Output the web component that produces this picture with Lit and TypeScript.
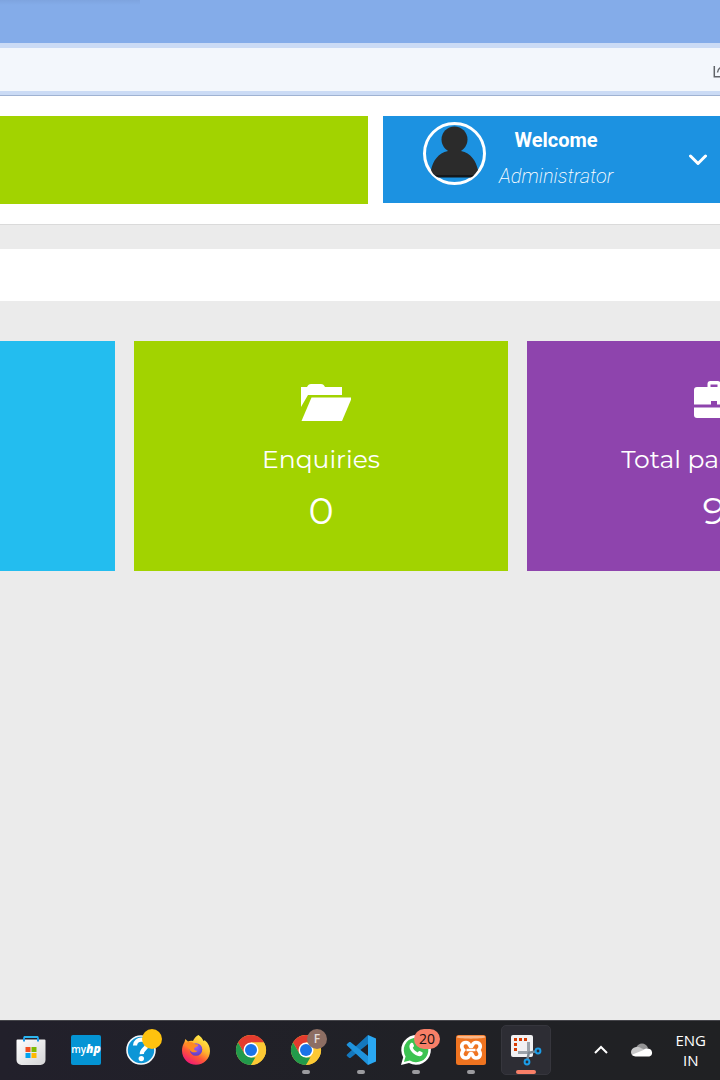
import { LitElement, html, css, svg } from "lit";
import { customElement } from "lit/decorators.js";
import { classMap } from "lit/directives/class-map.js";

const store = svg`
  <defs><linearGradient id="bag" x1="0" y1="0" x2="1" y2="1"><stop offset="0" stop-color="#ffffff"/><stop offset="1" stop-color="#d4d4d6"/></linearGradient></defs>
  <path d="M.5 5.500a1 1 0 0 1 1-1h27a1 1 0 0 1 1 1V25a5 5 0 0 1-5 5h-19a5 5 0 0 1-5-5z" fill="url(#bag)"/>
  <path d="M8 6.500V3a1 1 0 0 1 1-1h12a1 1 0 0 1 1 1v3.500" fill="none" stroke="#1c98e4" stroke-width="2"/>
  <path d="M8 2h14" stroke="#35c1f1" stroke-width="1.500"/>
  <path d="M9.500 12h5v5h-5z" fill="#f25022"/><path d="M15.500 12h5v5h-5z" fill="#7fba00"/>
  <path d="M9.500 18h5v5h-5z" fill="#00a4ef"/><path d="M15.500 18h5v5h-5z" fill="#ffb900"/>`;

const help = svg`
  <circle cx="15" cy="15" r="14" fill="#0d96d6" stroke="#f4f8fb" stroke-width="1.600"/>
  <path d="M9 10.500C9.200 2.500 21.800 3 21 10c-.6 4-5.600 4.200-5.200 9.200" fill="none" stroke="#fff" stroke-width="4.200"/>
  <circle cx="15.300" cy="23.600" r="2.700" fill="#fff"/>`;

const firefox = svg`
  <defs>
    <linearGradient id="fox" x1=".8" y1=".05" x2=".25" y2="1"><stop offset="0" stop-color="#fff04a"/><stop offset=".4" stop-color="#ffb52d"/><stop offset=".65" stop-color="#ff5a36"/><stop offset="1" stop-color="#f0127c"/></linearGradient>
    <radialGradient id="globe" cx=".5" cy=".3" r=".8"><stop offset="0" stop-color="#9a62ff"/><stop offset="1" stop-color="#5a36b5"/></radialGradient>
  </defs>
  <path d="M17.500 0c2 1.300 4 3.500 5 6l1.200-.8C27.500 8 29 12 29 16c0 7.800-6.300 13.700-14 13.700S1 23.500 1 15.700c0-3.300 1-6.300 2.500-8.700l.8-3L7 6.500c1.500-.8 3.500-1 5-.5 1-2.500 3-5 5.500-6z" fill="url(#fox)"/>
  <circle cx="15" cy="14.500" r="6.300" fill="url(#globe)"/>
  <path d="M3.500 9c3-3 7-3 10-.2 1.200 1 3.500.4 3.700 1.300.2 1.300-2.700 2-3.700 3-1 1.200.3 3 3 2.600-2 2.800-7.300 1.800-8-1.500C7 12.500 6 10.500 3.500 9z" fill="#ff8a22"/>`;

const chrome = svg`
  <circle cx="15" cy="15" r="15" fill="#ffcd40"/>
  <path d="M15 15 8.500 18.750 2 7.500A15 15 0 0 1 28 7.500H15z" fill="#e33b2e"/>
  <path d="M2 7.500 8.500 18.750 15 22.500h6.500L15 30A15 15 0 0 1 2 7.500z" fill="#229a4b"/>
  <path d="M28 7.500H15V15l6.500 3.750L15 30A15 15 0 0 0 28 7.500z" fill="#fcc934"/>
  <circle cx="15" cy="15" r="7.500" fill="#fff"/><circle cx="15" cy="15" r="6" fill="#1a73e8"/>`;

const code = svg`
  <path d="M22 0 1 19.500a1 1 0 0 0 0 1.500l2 1.800c.4.400 1 .4 1.400.1L22 9z" fill="#1478bd"/>
  <path d="M22 30 1 10.500A1 1 0 0 1 1 9L3 7.200c.4-.4 1-.4 1.400-.1L22 21z" fill="#1f93dc"/>
  <path d="M22 0 30 3.500V26.500L22 30z" fill="#2aa8f2"/>`;

const whatsapp = svg`
  <path d="M0 30 2.200 22.200A14.800 14.800 0 1 1 8 27.900z" fill="#fff"/>
  <path d="M2.900 27.100 4.600 21.400A12.300 12.300 0 1 1 8.900 25.600z" fill="#3cc351"/>
  <path d="M10 8c.8-.6 1.700-.4 2 .3l1 2.500c.2.600-.9 1.600-1.200 2 .8 2 2.800 3.800 4.900 4.600.5-.4 1.300-1.700 2-1.400l2.600 1.300c.8.400.4 2.200-.5 3-4 3.500-14-4.500-12.200-10.200.2-.8.700-1.600 1.400-2.100z" fill="#fff"/>`;

const xampp = svg`
  <rect width="30" height="30" rx="2.500" fill="#ef7420"/>
  <path d="M.8 2.500Q.8.800 2.500.8h25q1.700 0 1.700 1.700C24 4 6 4 .8 2.500z" fill="#f9b78a"/>
  <path d="M10 7.500c4.500 0 2.500 4 5 4s.5-4 5-4 5.500 4.500 2.500 7.500c3 3.500 2 8-2.500 8s-2.500-4.500-5-4.500-.5 4.500-5 4.500-5.500-4.500-2.500-8c-3-3-2-7.500 2.500-7.500z" fill="none" stroke="#fff" stroke-width="3.600"/>
  <path d="M10.500 15h9" stroke="#fff" stroke-width="2.500"/>`;

const snip = svg`
  <rect x="0" y="0" width="22" height="22" rx="2" fill="#f1f1f3"/>
  <path d="M3 3h3v3H3zM8 3h3v3H8zM13 3h3v3h-3zM3 8h3v3H3zM3 13h3v3H3z" fill="#d83b01"/>
  <path d="M17.500 7v11.500M7 17.500h11" stroke="#9ca3aa" stroke-width="3"/>
  <path d="m17 18 7-1.500M18 17l-1.500 7" stroke="#7d8790" stroke-width="2.500"/>
  <circle cx="27" cy="16" r="2.400" fill="none" stroke="#1b9de8" stroke-width="2"/>
  <circle cx="16" cy="27" r="2.400" fill="none" stroke="#1b9de8" stroke-width="2"/>`;

interface App {
  label: string;
  art?: unknown;
  badge?: string;
  tone?: string;
  open?: boolean;
  active?: boolean;
}

const apps: App[] = [
  { label: "Microsoft Store", art: store },
  { label: "myHP" },
  { label: "HP Support", art: help, badge: "", tone: "amber" },
  { label: "Firefox", art: firefox },
  { label: "Chrome", art: chrome },
  { label: "Chrome, profile F", art: chrome, badge: "F", tone: "brown", open: true },
  { label: "Visual Studio Code", art: code, open: true },
  { label: "WhatsApp", art: whatsapp, badge: "20", tone: "coral", open: true },
  { label: "XAMPP", art: xampp, open: true },
  { label: "Snipping Tool", art: snip, open: true, active: true },
];

@customElement("task-bar")
export class TaskBar extends LitElement {
  static styles = css`
    :host {
      display: flex;
      align-items: flex-start;
      justify-content: space-between;
      height: 60px;
      box-sizing: border-box;
      padding-top: 4px;
      border-top: 1px solid #45454a;
      background: linear-gradient(90deg, #22202b, #202126 60%, #202123);
      color: #fff;
      font-family: "Open Sans", "Noto Sans", sans-serif;
    }
    button {
      border: 0;
      padding: 0;
      background: none;
      color: inherit;
      font: inherit;
    }
    .apps {
      display: flex;
      gap: 5px;
      padding-left: 6px;
    }
    .app {
      position: relative;
      box-sizing: border-box;
      width: 50px;
      height: 50px;
      border: 1px solid transparent;
      border-radius: 5px;
      display: grid;
      place-items: center;
    }
    .app.active {
      background: #2d2d34;
      border-color: #36363d;
    }
    .app svg {
      width: 30px;
      height: 30px;
      overflow: visible;
    }
    .hp {
      width: 30px;
      height: 30px;
      border-radius: 2px;
      background: #0494d4;
      font: 600 10px/28px "Open Sans", sans-serif;
      white-space: nowrap;
    }
    .hp b {
      font-size: 12px;
      font-style: italic;
    }
    .badge {
      position: absolute;
      top: 3px;
      right: 3px;
      box-sizing: border-box;
      min-width: 20px;
      height: 20px;
      padding: 0 5px;
      border-radius: 10px;
      font-size: 14px;
      line-height: 20px;
    }
    .amber {
      background: #ffc20e;
    }
    .brown {
      background: #8d6e63;
      color: #e4dcd8;
      font-size: 12px;
      font-weight: 600;
    }
    .coral {
      right: 0;
      background: #f77f67;
      color: #16100f;
    }
    .mark {
      position: absolute;
      bottom: 0;
      left: 20px;
      width: 8px;
      height: 4px;
      border-radius: 2px;
      background: #9b9b9f;
    }
    .active .mark {
      left: 14px;
      width: 20px;
      background: #f77f67;
    }
    .tray {
      display: flex;
      align-items: center;
      gap: 22px;
      height: 50px;
      padding-right: 14px;
    }
    .tray svg {
      display: block;
    }
    .tray .lang {
      font-size: 15px;
      line-height: 20px;
      text-align: center;
    }
  `;

  render() {
    return html`
      <nav class="apps" aria-label="Apps">
        ${apps.map(
          (a) => html`<button class=${classMap({ app: true, active: !!a.active })} aria-label=${a.label}>
            ${a.art
              ? html`<svg viewBox="0 0 30 30" aria-hidden="true">${a.art}</svg>`
              : html`<span class="hp">my<b>hp</b></span>`}
            ${a.badge !== undefined ? html`<span class="badge ${a.tone}">${a.badge}</span>` : ""}
            ${a.open ? html`<span class="mark"></span>` : ""}
          </button>`
        )}
      </nav>
      <div class="tray">
        <button aria-label="Show hidden icons">
          <svg width="16" height="10" viewBox="0 0 16 10"><path d="m2 8 6-6 6 6" fill="none" stroke="#fff" stroke-width="2"/></svg>
        </button>
        <button aria-label="OneDrive">
          <svg width="22" height="14" viewBox="0 0 22 14">
            <path d="M5 5C7-1 15-1 17 5l-5 3z" fill="#949495"/>
            <path d="M5 4c3-.5 5 .5 12 5L2 13C-1 11-1 5 5 4z" fill="#c9c9ca"/>
            <path d="M1.500 11.500 12 7.300C14 5 20 4.500 21 9c.5 3-1.500 4.500-3.500 4.500h-13c-1.300 0-2.500-1-3-2z" fill="#fff"/>
          </svg>
        </button>
        <button class="lang">ENG<br />IN</button>
      </div>
    `;
  }
}

@customElement("app-root")
export class AppRoot extends LitElement {
  static styles = css`
    :host {
      display: flex;
      flex-direction: column;
      min-height: 100vh;
      overflow: hidden;
      background: #ebebeb;
      font-family: Roboto, sans-serif;
      color: #fff;
    }
    .tabs {
      height: 43px;
      background: #84ace9;
    }
    .shade {
      width: 140px;
      height: 5px;
      background: linear-gradient(#7ea4df, #84ace9);
    }
    .toolbar {
      display: flex;
      justify-content: flex-end;
      align-items: center;
      height: 43px;
      border-top: 5px solid #cbdbf5;
      border-bottom: 4px solid #cbdbf5;
      background: #f3f7fc;
      overflow: hidden;
    }
    .toolbar button {
      width: 7px;
      height: 16px;
      padding: 0;
      border: 0;
      background: none;
      overflow: hidden;
    }
    .toolbar svg {
      display: block;
    }
    header {
      display: grid;
      grid-template-columns: 368fr 337fr;
      gap: 15px;
      align-items: start;
      padding: 20px 0;
      border-top: 1px solid #9fb2d2;
      border-bottom: 1px solid #dadada;
      background: #fff;
    }
    .banner {
      height: 88px;
      background: #a2d300;
    }
    .account {
      display: flex;
      align-items: flex-start;
      gap: 13px;
      height: 87px;
      padding: 6px 13px 0 40px;
      border: 0;
      background: #1c92e1;
      color: inherit;
      font: 20px/36px Roboto, sans-serif;
    }
    .avatar {
      flex: none;
    }
    .who {
      display: grid;
      text-align: center;
    }
    .who strong {
      font-weight: 700;
    }
    .who em {
      font-weight: 200;
    }
    .chevron {
      margin: 31px 0 0 auto;
    }
    .crumbs {
      height: 52px;
      margin: 24px 0 40px;
      background: #fff;
    }
    .cards {
      display: grid;
      grid-template-columns: repeat(3, 1fr);
      gap: 19px;
      width: calc(100% + 440px);
      margin-left: -259px;
    }
    .card {
      height: 230px;
      box-sizing: border-box;
      padding-top: 38px;
      text-align: center;
      background: #a2d300;
      font-family: Montserrat, Inter, sans-serif;
    }
    .card svg {
      display: block;
      height: 44px;
      margin: 0 auto 16px;
    }
    .card h2 {
      margin: 0;
      font-size: 25px;
      line-height: 40px;
      font-weight: 400;
    }
    .card p {
      margin: 8px 0 0;
      font-size: 38px;
      line-height: 48px;
    }
    .sky {
      background: #23bdef;
    }
    .violet {
      background: #8e44ad;
    }
    task-bar {
      margin-top: auto;
    }
  `;

  render() {
    return html`
      <div class="tabs"><div class="shade"></div></div>
      <div class="toolbar">
        <button aria-label="Share">
          <svg width="16" height="16" viewBox="0 0 16 16" fill="none" stroke="#606368" stroke-width="1.500"><path d="M1.300 4v10.800h12.500M4.500 10.500C5 7 6.500 5.500 9 5"/></svg>
        </button>
      </div>
      <header>
        <div class="banner"></div>
        <button class="account">
          <svg class="avatar" width="63" height="63" viewBox="0 0 63 63" aria-hidden="true">
            <circle cx="31.500" cy="31.500" r="30" fill="none" stroke="#fff" stroke-width="3"/>
            <circle cx="31.500" cy="17.500" r="13" fill="#2b2b2b"/>
            <path d="M25 27h13v2c10 2 15 10 17 19-2 3-4 5-6 7H14c-3-2-5-4-6-7 2-9 7-17 17-19z" fill="#2b2b2b"/>
            <path d="M12 53h39l-3 2.500H15z" fill="#15181b"/>
          </svg>
          <span class="who"><strong>Welcome</strong><em>Administrator</em></span>
          <svg class="chevron" width="18" height="12" viewBox="0 0 18 12" aria-hidden="true"><path d="m1.500 3 7.500 7.500L16.500 3" fill="none" stroke="#fff" stroke-width="3" stroke-linecap="round" stroke-linejoin="round"/></svg>
        </button>
      </header>
      <div class="crumbs"></div>
      <section class="cards">
        <article class="card sky"></article>
        <article class="card">
          <svg width="60" viewBox="0 0 60 44" fill="#fff" aria-hidden="true">
            <path d="M10 28V8h6c1-2 2-3 4-3h10c2 0 3 1 4 3h17v8H17z"/>
            <path d="M20.500 18.500H61L51 42H10.500z"/>
          </svg>
          <h2>Enquiries</h2>
          <p>0</p>
        </article>
        <article class="card violet">
          <svg width="40" viewBox="0 0 40 44" fill="#fff" aria-hidden="true">
            <path fill-rule="evenodd" d="M3 8h10.500V5a3 3 0 0 1 3-3h7a3 3 0 0 1 3 3v3H37a3 3 0 0 1 3 3v14.500H23V22h-6v3.500H0V11a3 3 0 0 1 3-3zm13.500-2.500V8h7V5.500z"/>
            <path d="M0 28.500h40V36a3 3 0 0 1-3 3H3a3 3 0 0 1-3-3z"/>
          </svg>
          <h2>Total packages</h2>
          <p>9</p>
        </article>
      </section>
      <task-bar></task-bar>
    `;
  }
}
